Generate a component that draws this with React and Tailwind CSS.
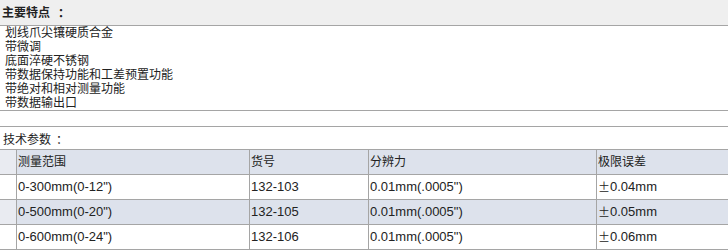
import React from "react";

const FEATURES = [
  "划线爪尖镶硬质合金",
  "带微调",
  "底面淬硬不锈钢",
  "带数据保持功能和工差预置功能",
  "带绝对和相对测量功能",
  "带数据输出口",
];

const HEAD = ["测量范围", "货号", "分辨力", "极限误差"];

const ROWS = [
  ['0-300mm(0-12")', "132-103", '0.01mm(.0005")', "0.04mm"],
  ['0-500mm(0-20")', "132-105", '0.01mm(.0005")', "0.05mm"],
  ['0-600mm(0-24")', "132-106", '0.01mm(.0005")', "0.06mm"],
];

const Row = ({ cells, shaded, head }) => (
  <div
    className={`grid grid-cols-[16px_233px_119px_228px_1fr] h-[25px] border-t border-[#a5a5a5] ${
      shaded ? "bg-[#dde2ec]" : "bg-white"
    } ${head ? "text-[12px]" : "text-[13px]"}`}
  >
    <div className={shaded ? "bg-[#e9ebf1]" : "bg-white"} />
    {cells.map((c, i) => (
      <div key={i} className="border-l border-[#a5a5a5] pl-px flex items-center">
        {!head && i === 3 && (
          <span className="text-[12px] font-['Noto_Sans_CJK_SC',sans-serif]">±</span>
        )}
        {c}
      </div>
    ))}
  </div>
);

export default function App() {
  return (
    <div className="w-[728px] h-[251px] overflow-hidden bg-white text-[12px] text-[#222] font-['Liberation_Sans','Noto_Sans_CJK_SC',sans-serif]">
      {/* 主要特点 */}
      <div className="h-[26px] bg-[#efefef] border-b border-[#a5a5a5] pl-[2px] pt-px flex items-center font-bold">
        主要特点
        <span className="ml-[5px] font-['Noto_Sans_CJK_TC',sans-serif]">：</span>
      </div>
      <div className="h-[85px] pl-[5px] border-b border-[#a5a5a5]">
        {FEATURES.map((f) => (
          <div key={f} className="h-[14px] leading-[14px]">
            {f}
          </div>
        ))}
      </div>
      <div className="h-[16px] border-b border-[#a5a5a5]" />

      {/* 技术参数 */}
      <div className="h-[22px] pl-[3px] flex items-center pt-[4px]">
        技术参数
        <span className="ml-[2px] font-['Noto_Sans_CJK_TC',sans-serif]">：</span>
      </div>
      <div className="border-b border-[#a5a5a5]">
        <Row cells={HEAD} shaded head />
        {ROWS.map((r, i) => (
          <Row key={i} cells={r} shaded={i === 1} />
        ))}
      </div>
    </div>
  );
}
